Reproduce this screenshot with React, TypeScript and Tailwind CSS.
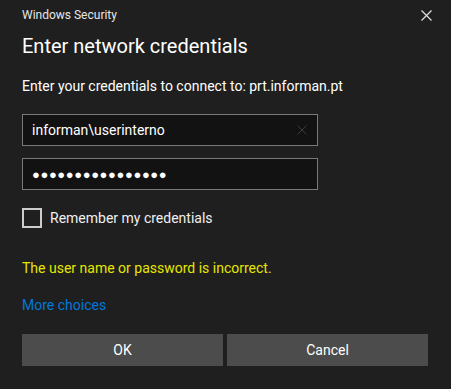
import { useState } from 'react';

const font = 'Roboto, "Noto Sans", sans-serif';

export default function App() {
  const [user, setUser] = useState('informan\\userinterno');
  const [remember, setRemember] = useState(false);

  return (
    <div
      className="w-[451px] h-[389px] bg-[#1f1f1f] text-white flex flex-col px-[22px]"
      style={{ fontFamily: font }}
    >
      <div className="flex items-center justify-between h-[30px]">
        <span className="text-[12px] text-[#e6e6e6]">Windows Security</span>
        <button className="w-[16px] h-[16px] flex items-center justify-center -mr-[5px]">
          <svg width="11" height="11" viewBox="0 0 11 11">
            <path d="M0.5 0.5 L10.5 10.5 M10.5 0.5 L0.5 10.5" stroke="#e0e0e0" strokeWidth="1.2" />
          </svg>
        </button>
      </div>

      <h1 className="text-[20px] leading-[28px] mt-[2px] text-white">Enter network credentials</h1>

      <p className="text-[14px] leading-[20px] mt-[16px] text-white">
        Enter your credentials to connect to: prt.informan.pt
      </p>

      <div className="mt-[18px] w-[296px] h-[32px] border border-[#7a7a7a] bg-[#121212] flex items-center pl-[9px] pr-[10px]">
        <input
          value={user}
          onChange={(e) => setUser(e.target.value)}
          style={{ fontFamily: font }}
          className="flex-1 min-w-0 bg-transparent outline-none text-[14px] leading-[20px] text-white"
        />
        <svg width="10" height="10" viewBox="0 0 10 10">
          <path d="M0.5 0.5 L9.5 9.5 M9.5 0.5 L0.5 9.5" stroke="#3a3a3a" strokeWidth="1" />
        </svg>
      </div>

      <div className="mt-[12px] w-[296px] h-[32px] border border-[#7a7a7a] bg-[#121212] flex items-center pl-[9px]">
        <span className="text-[13px] tracking-[0.6px] text-white leading-none" style={{ fontFamily: '"Noto Sans", sans-serif' }}>
          ●●●●●●●●●●●●●●●●
        </span>
      </div>

      <label className="mt-[18px] h-[20px] flex items-center gap-[8px] cursor-pointer">
        <button
          onClick={() => setRemember(!remember)}
          className="w-[20px] h-[20px] border-2 border-[#cccccc] bg-transparent"
        />
        <span className="text-[14px] leading-[20px] text-[#f0f0f0]">Remember my credentials</span>
      </label>

      <p className="mt-[30px] text-[14px] leading-[20px] text-[#e6e600]">The user name or password is incorrect.</p>

      <a className="mt-[17px] text-[14px] leading-[20px] text-[#0078d7] cursor-pointer">More choices</a>

      <div className="mt-[19px] grid grid-cols-2 gap-[4px] w-[406px]">
        <button className="h-[32px] bg-[#4c4c4c] text-[14px] text-white">OK</button>
        <button className="h-[32px] bg-[#4c4c4c] text-[14px] text-white">Cancel</button>
      </div>
    </div>
  );
}
